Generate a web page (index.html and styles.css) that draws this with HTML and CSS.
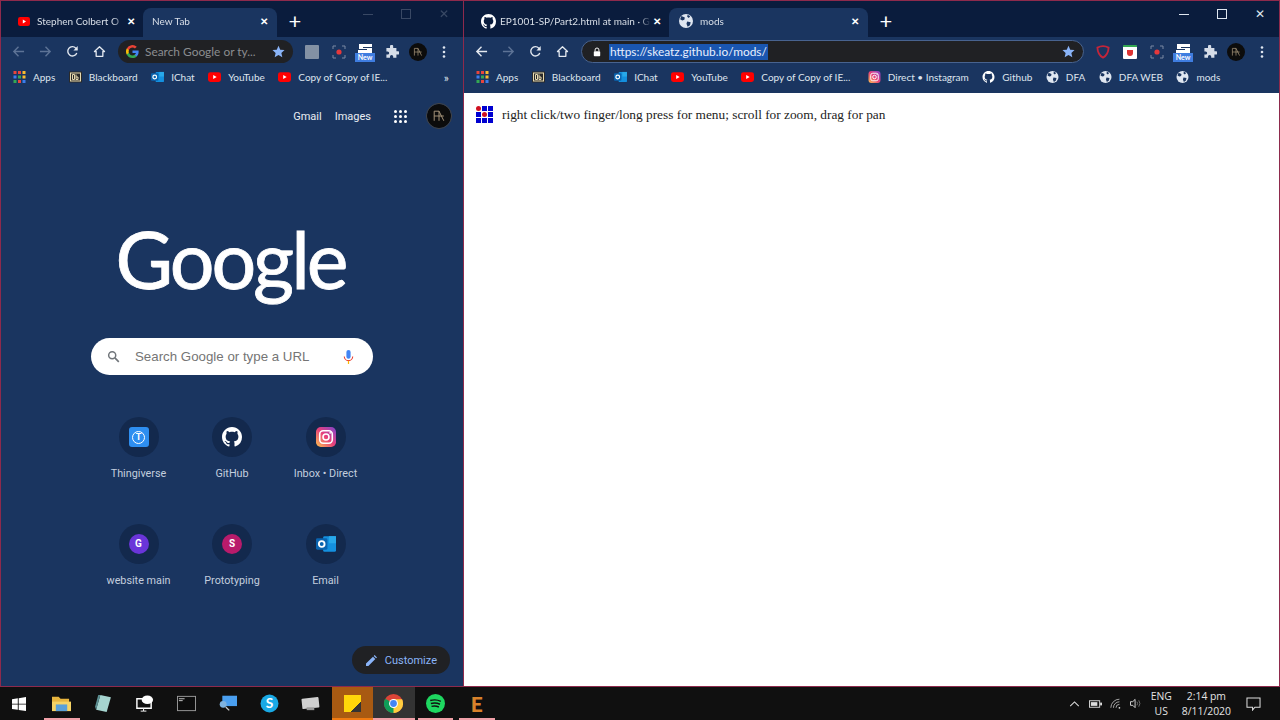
FILE: index.html
```html
<!DOCTYPE html>
<html lang="en">
<head>
    <meta charset="UTF-8">
    <title>Two Chrome windows</title>
    <link rel="stylesheet" href="styles.css">
</head>
<body>
    <svg class="defs" width="0" height="0">
        <defs>
            <symbol id="yt" viewBox="0 0 12 9"><rect width="12" height="9" rx="2.2" fill="#f00"/><path d="M4.8 2.6v3.8L8 4.5z" fill="#fff"/></symbol>
            <symbol id="gh" viewBox="0 0 16 16"><path fill="#fff" d="M8 0C3.58 0 0 3.58 0 8c0 3.54 2.29 6.53 5.47 7.59.4.07.55-.17.55-.38 0-.19-.01-.82-.01-1.49-2.01.37-2.53-.49-2.69-.94-.09-.23-.48-.94-.82-1.13-.28-.15-.68-.52-.01-.53.63-.01 1.08.58 1.23.82.72 1.21 1.87.87 2.33.66.07-.52.28-.87.51-1.07-1.78-.2-3.64-.89-3.64-3.95 0-.87.31-1.59.82-2.15-.08-.2-.36-1.02.08-2.12 0 0 .67-.21 2.2.82.64-.18 1.32-.27 2-.27s1.36.09 2 .27c1.53-1.04 2.2-.82 2.2-.82.44 1.1.16 1.92.08 2.12.51.56.82 1.27.82 2.15 0 3.07-1.87 3.75-3.65 3.95.29.25.54.73.54 1.48 0 1.07-.01 1.93-.01 2.2 0 .21.15.46.55.38A8.01 8.01 0 0 0 16 8c0-4.42-3.58-8-8-8z"/></symbol>
            <symbol id="globe" viewBox="0 0 12 12"><circle cx="6" cy="6" r="6" fill="#dfe6f0"/><path d="M2 1.8 5 3 4.6 5 2.8 5.6 1 4.6zM7 6.4l3 .6-.6 2.6L7.4 11 6.4 8.4zM7.4.6 9.6 2 8.4 3.4 7 2.4z" fill="#1a3560"/></symbol>
            <symbol id="apps" viewBox="0 0 12 12"><g fill="#e8453c"><rect width="3" height="3"/><rect x="4.5" width="3" height="3"/></g><rect x="9" width="3" height="3" fill="#f9bb2d"/><rect y="4.5" width="3" height="3" fill="#3b7ded"/><rect x="4.5" y="4.5" width="3" height="3" fill="#34a853"/><rect x="9" y="4.5" width="3" height="3" fill="#f9bb2d"/><rect y="9" width="3" height="3" fill="#34a853"/><rect x="4.5" y="9" width="3" height="3" fill="#e8453c"/><rect x="9" y="9" width="3" height="3" fill="#3b7ded"/></symbol>
            <symbol id="bb" viewBox="0 0 13 11"><rect width="13" height="11" fill="#2a2a2a"/><rect x="1.5" y="1.5" width="10" height="8" fill="none" stroke="#e6d9b0"/><path d="M3.5 3v5M3.5 3h2v5h-2M7 3v5h2V5.5H7" fill="none" stroke="#e6d9b0"/></symbol>
            <symbol id="outlook" viewBox="0 0 14 13"><rect x="5" y="1" width="9" height="11" rx="1" fill="#1490df"/><rect x="9" y="1" width="5" height="5" fill="#28a8ea"/><rect y="2.5" width="8" height="8" rx="1" fill="#0a64b0"/><circle cx="4" cy="6.5" r="2" fill="none" stroke="#fff" stroke-width="1.3"/></symbol>
            <linearGradient id="ig" x1="0" y1="1" x2="1" y2="0"><stop offset="0" stop-color="#fdc34f"/><stop offset=".5" stop-color="#e8407a"/><stop offset="1" stop-color="#7d45d0"/></linearGradient>
            <symbol id="insta" viewBox="0 0 14 14"><rect width="14" height="14" rx="3.4" fill="url(#ig)"/><rect x="2.6" y="2.6" width="8.8" height="8.8" rx="2.4" fill="none" stroke="#fff" stroke-width="1.1"/><circle cx="7" cy="7" r="2.1" fill="none" stroke="#fff" stroke-width="1.1"/><circle cx="9.9" cy="4.1" r=".6" fill="#fff"/></symbol>
            <symbol id="back" viewBox="0 0 14 14"><path d="M13 7H2M7 2 2 7l5 5" fill="none" stroke="currentColor" stroke-width="1.5"/></symbol>
            <symbol id="forward" viewBox="0 0 14 14"><path d="M1 7h11M7 2l5 5-5 5" fill="none" stroke="currentColor" stroke-width="1.5"/></symbol>
            <symbol id="reload" viewBox="0 0 14 14"><path d="M11.6 8.6A5 5 0 1 1 10.6 3.4L12 5" fill="none" stroke="currentColor" stroke-width="1.5"/><path d="M12.6 1.2v4.6H8z" fill="currentColor"/></symbol>
            <symbol id="home" viewBox="0 0 14 14"><path d="M7 1.8 1.6 7H3.4v5.2h7.2V7h1.8z" fill="none" stroke="currentColor" stroke-width="1.4" stroke-linejoin="round"/></symbol>
            <symbol id="star" viewBox="0 0 14 14"><path d="m7 .8 1.9 4.2 4.6.5-3.4 3.1 1 4.5L7 10.8l-4.1 2.3 1-4.5L.5 5.5 5.1 5z" fill="#8ab4f8"/></symbol>
            <symbol id="puzzle" viewBox="0 0 14 14"><path d="M5 1.4a1.6 1.6 0 0 1 3.2 0V3h3.2v3.2H13a1.6 1.6 0 0 1 0 3.2h-1.6v3.4H8.2v-1.3a1.6 1.6 0 0 0-3.2 0v1.3H1.4V9.6h1.2a1.6 1.6 0 0 0 0-3.2H1.4V3H5z" fill="#d6dde8"/></symbol>
            <symbol id="dots" viewBox="0 0 4 14"><g fill="#dfe6f0"><circle cx="2" cy="2.5" r="1.3"/><circle cx="2" cy="7" r="1.3"/><circle cx="2" cy="11.5" r="1.3"/></g></symbol>
            <symbol id="record" viewBox="0 0 14 14"><path d="M1 4V1h3M10 1h3v3M13 10v3h-3M4 13H1v-3" fill="none" stroke="#7b8aa3"/><circle cx="7" cy="7" r="2.6" fill="#e5383b"/></symbol>
            <symbol id="avatar" viewBox="0 0 20 20"><circle cx="10" cy="10" r="10" fill="#0c0c0c"/><path d="M6 14V6h4v8M10 6l4 8M10 10h4M6 10h4" fill="none" stroke="#a8977c" stroke-width=".8"/></symbol>
            <symbol id="new-ext" viewBox="0 0 20 20"><path d="M4 2h13v3H8v1h9v5H3V8h9V7H4z" fill="#fff"/><rect y="11" width="20" height="9" fill="#3f7de0"/></symbol>
            <symbol id="g-color" viewBox="0 0 14 14"><path d="M13.6 7.2c0-.5 0-.9-.1-1.3H7v2.6h3.7a3.2 3.2 0 0 1-1.4 2.1v1.7h2.2c1.3-1.2 2.1-3 2.1-5.1z" fill="#4285f4"/><path d="M7 14c1.9 0 3.4-.6 4.5-1.7l-2.2-1.7c-.6.4-1.4.7-2.3.7-1.8 0-3.3-1.2-3.9-2.9H.8v1.8A7 7 0 0 0 7 14z" fill="#34a853"/><path d="M3.1 8.4a4.2 4.2 0 0 1 0-2.8V3.8H.8a7 7 0 0 0 0 6.4z" fill="#fbbc05"/><path d="M7 2.8c1 0 1.9.4 2.6 1l2-1.9A7 7 0 0 0 .8 3.8l2.3 1.8C3.7 4 5.2 2.8 7 2.8z" fill="#ea4335"/></symbol>
        </defs>
    </svg>

    <div class="desktop">
        <section class="window window-left">
            <div class="tabstrip">
                <div class="tab">
                    <svg class="fav-yt"><use href="#yt"/></svg>
                    <span class="tab-title">Stephen Colbert O</span>
                    <span class="tab-x">✕</span>
                </div>
                <div class="tab active">
                    <span class="tab-title">New Tab</span>
                    <span class="tab-x">✕</span>
                </div>
                <span class="new-tab">+</span>
                <div class="win-controls dim">
                    <span class="win-min"></span>
                    <span class="win-max"></span>
                    <span class="win-close">✕</span>
                </div>
            </div>
            <div class="toolbar">
                <svg class="nav off"><use href="#back"/></svg>
                <svg class="nav off"><use href="#forward"/></svg>
                <svg class="nav"><use href="#reload"/></svg>
                <svg class="nav"><use href="#home"/></svg>
                <div class="omnibox short">
                    <svg class="omni-g"><use href="#g-color"/></svg>
                    <span class="omni-hint">Search Google or ty...</span>
                    <svg class="omni-star"><use href="#star"/></svg>
                </div>
                <div class="ext-row">
                    <span class="ext-grey"></span>
                    <svg class="ext"><use href="#record"/></svg>
                    <span class="ext-new"><svg class="ext-new-ic"><use href="#new-ext"/></svg><b>New</b></span>
                    <svg class="ext"><use href="#puzzle"/></svg>
                    <svg class="ext-avatar"><use href="#avatar"/></svg>
                    <svg class="ext-dots"><use href="#dots"/></svg>
                </div>
            </div>
            <div class="bookmarks">
                <a class="bm"><svg><use href="#apps"/></svg>Apps</a>
                <a class="bm"><svg><use href="#bb"/></svg>Blackboard</a>
                <a class="bm"><svg><use href="#outlook"/></svg>IChat</a>
                <a class="bm"><svg><use href="#yt"/></svg>YouTube</a>
                <a class="bm"><svg><use href="#yt"/></svg>Copy of Copy of IE...</a>
                <span class="bm-more">»</span>
            </div>
            <main class="ntp">
                <div class="ntp-top">
                    <a>Gmail</a>
                    <a>Images</a>
                    <span class="ntp-grid"><i></i><i></i><i></i><i></i><i></i><i></i><i></i><i></i><i></i></span>
                    <svg class="ntp-avatar"><use href="#avatar"/></svg>
                </div>
                <div class="logo">Google</div>
                <div class="ntp-search">
                    <svg class="ntp-lens" viewBox="0 0 14 14"><circle cx="5.6" cy="5.6" r="3.8" fill="none" stroke="#70757a" stroke-width="1.6"/><path d="m8.5 8.5 4.2 4.2" stroke="#70757a" stroke-width="1.8"/></svg>
                    <span class="ntp-hint">Search Google or type a URL</span>
                    <svg class="ntp-mic" viewBox="0 0 12 16"><rect x="3.6" y="0" width="4.8" height="10" rx="2.4" fill="#4285f4"/><path d="M1.2 7.4a4.8 4.8 0 0 0 9.6 0" fill="none" stroke="#ea4335" stroke-width="1.3"/><path d="M6 12.4V16" stroke="#fbbc05" stroke-width="1.4"/></svg>
                </div>
                <div class="shortcuts">
                    <div class="shortcut">
                        <span class="sc-ball"><span class="sc-thing"><span>T</span></span></span>
                        <span class="sc-label">Thingiverse</span>
                    </div>
                    <div class="shortcut">
                        <span class="sc-ball"><svg class="sc-ic"><use href="#gh"/></svg></span>
                        <span class="sc-label">GitHub</span>
                    </div>
                    <div class="shortcut">
                        <span class="sc-ball"><svg class="sc-ic"><use href="#insta"/></svg></span>
                        <span class="sc-label">Inbox • Direct</span>
                    </div>
                    <div class="shortcut">
                        <span class="sc-ball"><span class="sc-letter purple">G</span></span>
                        <span class="sc-label">website main</span>
                    </div>
                    <div class="shortcut">
                        <span class="sc-ball"><span class="sc-letter pink">S</span></span>
                        <span class="sc-label">Prototyping</span>
                    </div>
                    <div class="shortcut">
                        <span class="sc-ball"><svg class="sc-ic"><use href="#outlook"/></svg></span>
                        <span class="sc-label">Email</span>
                    </div>
                </div>
                <div class="customize">
                    <svg viewBox="0 0 12 12"><path d="M0 12V9.4L7.6 1.8l2.6 2.6L2.6 12zM8.4 1l1-1L12 2.6l-1 1z" fill="#8ab4f8"/></svg>
                    <span>Customize</span>
                </div>
            </main>
        </section>

        <section class="window window-right">
            <div class="tabstrip">
                <div class="tab long">
                    <svg class="fav-gh"><use href="#gh"/></svg>
                    <span class="tab-title">EP1001-SP/Part2.html at main · G</span>
                    <span class="tab-x">✕</span>
                </div>
                <div class="tab active wide">
                    <svg class="fav-globe"><use href="#globe"/></svg>
                    <span class="tab-title">mods</span>
                    <span class="tab-x">✕</span>
                </div>
                <span class="new-tab">+</span>
                <div class="win-controls">
                    <span class="win-min"></span>
                    <span class="win-max"></span>
                    <span class="win-close">✕</span>
                </div>
            </div>
            <div class="toolbar">
                <svg class="nav"><use href="#back"/></svg>
                <svg class="nav off"><use href="#forward"/></svg>
                <svg class="nav"><use href="#reload"/></svg>
                <svg class="nav"><use href="#home"/></svg>
                <div class="omnibox focused">
                    <svg class="omni-lock" viewBox="0 0 10 12"><path d="M2.6 5V3.4a2.4 2.4 0 0 1 4.8 0V5" fill="none" stroke="#fff" stroke-width="1.2"/><rect x="1" y="5" width="8" height="6.4" rx="1" fill="#fff"/></svg>
                    <span class="omni-url">https://skeatz.github.io/mods/</span>
                    <svg class="omni-star"><use href="#star"/></svg>
                </div>
                <div class="ext-row">
                    <svg class="ext" viewBox="0 0 14 14"><path d="M1.4 2.6C5 .8 9 .8 12.6 2.6 12.4 7 10 11 7 12.6 4 11 1.6 7 1.4 2.6z" fill="none" stroke="#c4253a" stroke-width="1.8"/></svg>
                    <span class="ext-honey"><i></i></span>
                    <svg class="ext"><use href="#record"/></svg>
                    <span class="ext-new"><svg class="ext-new-ic"><use href="#new-ext"/></svg><b>New</b></span>
                    <svg class="ext"><use href="#puzzle"/></svg>
                    <svg class="ext-avatar"><use href="#avatar"/></svg>
                    <svg class="ext-dots"><use href="#dots"/></svg>
                </div>
            </div>
            <div class="bookmarks">
                <a class="bm"><svg><use href="#apps"/></svg>Apps</a>
                <a class="bm"><svg><use href="#bb"/></svg>Blackboard</a>
                <a class="bm"><svg><use href="#outlook"/></svg>IChat</a>
                <a class="bm"><svg><use href="#yt"/></svg>YouTube</a>
                <a class="bm"><svg><use href="#yt"/></svg>Copy of Copy of IE...</a>
                <a class="bm bm-ig"><svg><use href="#insta"/></svg>Direct • Instagram</a>
                <a class="bm"><svg><use href="#gh"/></svg>Github</a>
                <a class="bm"><svg><use href="#globe"/></svg>DFA</a>
                <a class="bm"><svg><use href="#globe"/></svg>DFA WEB</a>
                <a class="bm"><svg><use href="#globe"/></svg>mods</a>
            </div>
            <main class="mods">
                <span class="mods-logo">
                    <i class="red"></i><i></i><i></i>
                    <i></i><i class="red"></i><i></i>
                    <i></i><i></i><i></i>
                </span>
                <span>right click/two finger/long press for menu; scroll for zoom, drag for pan</span>
            </main>
        </section>
    </div>

    <footer class="taskbar">
        <svg class="tb-win" viewBox="0 0 14 14"><path d="M0 2.2 5.8 1.3V6.7H0zM6.7 1.2 14 0V6.7H6.7zM0 7.5H5.8V12.8L0 11.9zM6.7 7.5H14V14L6.7 12.9z" fill="#fff"/></svg>
        <span class="tb-item running"><svg viewBox="0 0 20 18"><path d="M0 2h7l2 2h9v13H0z" fill="#e8b53e"/><rect y="7" width="20" height="10" fill="#f6d365"/><rect x="4" y="10" width="12" height="7" fill="#5aa0d8"/></svg></span>
        <span class="tb-item"><svg viewBox="0 0 18 18"><path d="M6 1 16 3 12 17 2 15z" fill="#a5d4cf"/><path d="M6 1 2 15 1 12 4 1z" fill="#5b8f92"/></svg></span>
        <span class="tb-item"><svg viewBox="0 0 20 20"><path d="M2 5H17V15H2z" fill="none" stroke="#fff" stroke-width="1.5"/><ellipse cx="13" cy="6" rx="6" ry="4.5" fill="#fff"/><path d="M9 15V18H6M9 18H12" stroke="#fff"/></svg></span>
        <span class="tb-item"><svg viewBox="0 0 20 16"><rect x=".5" y=".5" width="19" height="15" fill="#0c0c0c" stroke="#9a9a9a"/><path d="M2 3H8M2 5H6" stroke="#ccc"/></svg></span>
        <span class="tb-item"><svg viewBox="0 0 22 20"><rect x="5" y="1" width="17" height="12" fill="#4a9ff0"/><circle cx="6" cy="11" r="4" fill="#7fb3e0"/><path d="m9 14 4 4" stroke="#ccc" stroke-width="1.5"/></svg></span>
        <span class="tb-item"><svg viewBox="0 0 18 18"><circle cx="9" cy="9" r="8.5" fill="#19a9e5"/><text class="tb-skype" x="9" y="13.5" text-anchor="middle">S</text></svg></span>
        <span class="tb-item"><svg viewBox="0 0 20 16"><rect x="1" y="2" width="18" height="11" rx="1" fill="#d0d0d0" transform="rotate(-6 10 8)"/><rect x="6" y="12" width="8" height="3" fill="#999"/></svg></span>
        <span class="tb-item tb-sticky running"><span class="sticky"></span></span>
        <span class="tb-item tb-chrome running"><svg viewBox="0 0 18 18"><circle cx="9" cy="9" r="9" fill="#db4437"/><path d="M9 9 1.2 4.5A9 9 0 0 0 9 18l4-4z" fill="#0f9d58"/><path d="M9 5h8.1A9 9 0 0 1 9 18z" fill="#ffcd40"/><circle cx="9" cy="9" r="4.2" fill="#fff"/><circle cx="9" cy="9" r="3.2" fill="#4285f4"/></svg></span>
        <span class="tb-item running"><svg viewBox="0 0 18 18"><circle cx="9" cy="9" r="9" fill="#1ed760"/><path d="M4 6.2c3.5-1 7-.8 10 .8M4.6 9c3-.8 6-.6 8.6.7M5.2 11.7c2.4-.6 4.8-.4 7 .6" fill="none" stroke="#111" stroke-width="1.4"/></svg></span>
        <span class="tb-item running"><span class="tb-e">E</span></span>

        <div class="tray">
            <svg class="tray-up" viewBox="0 0 12 7"><path d="m1 6 5-5 5 5" fill="none" stroke="#ddd" stroke-width="1.2"/></svg>
            <svg class="tray-batt" viewBox="0 0 14 8"><rect x=".5" y=".5" width="11" height="7" fill="none" stroke="#ddd"/><rect x="2" y="2" width="7" height="4" fill="#ddd"/><rect x="12" y="2.5" width="2" height="3" fill="#ddd"/></svg>
            <svg class="tray-wifi" viewBox="0 0 14 12"><path d="M1 11A10 10 0 0 1 11 1M4 11A7 7 0 0 1 11 4M7 11A4 4 0 0 1 11 7" fill="none" stroke="#bbb"/><circle cx="11" cy="11" r="1" fill="#ddd"/></svg>
            <svg class="tray-vol" viewBox="0 0 14 12"><path d="M1 4H3.5L6 1.5V10.5L3.5 8H1z" fill="none" stroke="#ddd"/><path d="M8 4Q9.5 6 8 8M10 2.5Q12.5 6 10 9.5" fill="none" stroke="#777"/></svg>
            <div class="tray-lang"><span>ENG</span><span>US</span></div>
            <div class="tray-clock"><span>2:14 pm</span><span>8/11/2020</span></div>
            <svg class="tray-note" viewBox="0 0 16 15"><path d="M1 1H15V11H9.5L7 14V11H1z" fill="none" stroke="#ddd" stroke-width="1.1"/></svg>
        </div>
    </footer>
</body>
</html>
```

FILE: styles.css
```css
* {
    box-sizing: border-box;
}

html, body {
    margin: 0;
    width: 1280px;
    height: 720px;
    overflow: hidden;
}

body {
    display: flex;
    flex-direction: column;
    font-family: Lato, "Open Sans", sans-serif;
    background: #101010;
    color: #e6ebf2;
}

.defs {
    position: absolute;
}

svg {
    display: block;
    flex: none;
}

.desktop {
    display: flex;
    height: 687px;
}

.window {
    display: flex;
    flex-direction: column;
    border: 1px solid #8e2a4c;
}

.window-left {
    width: 464px;
}

.window-right {
    width: 816px;
    border-left: 0;
}

/* tabs */
.tabstrip {
    display: flex;
    height: 36px;
    padding: 7px 0 0 4px;
    background: #0a1c3d;
    font-size: 10px;
    flex: none;
}

.tab {
    display: flex;
    align-items: center;
    width: 138px;
    height: 29px;
    padding: 0 6px 3px 13px;
    color: #d9dfe8;
    white-space: nowrap;
}

.tab.long {
    width: 201px;
}

.tab.active {
    width: 134px;
    padding-left: 9px;
    padding-right: 7px;
    background: #1a3560;
    border-radius: 8px 8px 0 0;
}

.tab.wide {
    width: 199px;
    padding-left: 10px;
}

.tab-title {
    flex: 1;
    min-width: 0;
    overflow: hidden;
    -webkit-mask-image: linear-gradient(to left, transparent, #000 12px);
    mask-image: linear-gradient(to left, transparent, #000 12px);
}

.tab-x {
    width: 12px;
    font-size: 10px;
    font-weight: 700;
    color: #fff;
    text-align: center;
}

.fav-yt {
    width: 12px;
    height: 9px;
    margin-right: 7px;
}

.fav-gh {
    width: 15px;
    height: 15px;
    margin-right: 4px;
}

.fav-globe {
    width: 14px;
    height: 14px;
    margin-right: 7px;
}

.new-tab {
    width: 36px;
    height: 29px;
    font-size: 22px;
    line-height: 26px;
    color: #fff;
    text-align: center;
}

.win-controls {
    display: flex;
    align-items: center;
    justify-content: space-between;
    margin: -7px 0 0 auto;
    width: 100px;
    height: 26px;
    padding-right: 14px;
    color: #dfe6f0;
}

.win-controls.dim {
    opacity: 0.22;
}

.win-min {
    width: 10px;
    height: 1px;
    background: currentColor;
}

.win-max {
    width: 10px;
    height: 10px;
    border: 1px solid currentColor;
}

.win-close {
    font-size: 12px;
    line-height: 1;
}

/* toolbar */
.toolbar {
    display: flex;
    align-items: center;
    height: 29px;
    padding-left: 11px;
    background: #1a3560;
    flex: none;
}

.nav {
    width: 13px;
    height: 13px;
    margin-right: 14px;
    color: #e4e9f0;
}

.nav.off {
    color: #5d7396;
}

.omnibox {
    display: flex;
    align-items: center;
    height: 23px;
    margin-left: -2px;
    padding: 0 8px;
    background: #202124;
    border-radius: 12px;
    font-size: 11.9px;
}

.omnibox.short {
    width: 175px;
}

.omnibox.focused {
    width: 503px;
    border: 1px solid #48638f;
}

.omni-g {
    width: 13px;
    height: 13px;
    margin-right: 6px;
}

.omni-hint {
    flex: 1;
    color: #8b8d90;
    line-height: 15px;
    padding-bottom: 1px;
}

.omni-star {
    width: 13px;
    height: 13px;
}

.omni-lock {
    width: 8px;
    height: 10px;
    margin: 0 8px 0 3px;
}

.omni-url {
    margin-right: auto;
    padding: 0 1px 1px;
    background: #1a56b0;
    color: #e8f0fe;
    line-height: 15px;
}

.ext-row {
    display: flex;
    align-items: center;
    flex: 1;
    gap: 13px;
    padding-left: 12px;
}

.ext {
    width: 14px;
    height: 14px;
}

.ext-grey {
    width: 14px;
    height: 14px;
    background: #8391a4;
    border-radius: 1px;
}

.ext-honey {
    display: flex;
    align-items: center;
    justify-content: center;
    width: 14px;
    height: 14px;
    background: #fff;
    border-top: 2px solid #34a853;
    border-radius: 1px;
}

.ext-honey i {
    width: 6px;
    height: 6px;
    background: #d33;
    border-radius: 0 0 3px 3px;
}

.ext-new {
    position: relative;
    width: 20px;
    height: 20px;
    margin: 0 -3px 0 -4px;
}

.ext-new-ic {
    width: 20px;
    height: 20px;
}

.ext-new b {
    position: absolute;
    left: 0;
    right: 0;
    bottom: 0;
    color: #fff;
    font-size: 7px;
    line-height: 9px;
    text-align: center;
}

.ext-avatar {
    width: 18px;
    height: 18px;
    margin-left: -3px;
}

.ext-dots {
    width: 4px;
    height: 14px;
    margin-left: 2px;
}

/* bookmarks */
.bookmarks {
    display: flex;
    align-items: center;
    height: 27px;
    padding: 0 0 5px 12px;
    gap: 13.5px;
    background: #1a3560;
    font-size: 10px;
    color: #dfe5ee;
    flex: none;
}

.bm {
    display: flex;
    align-items: center;
    gap: 7px;
    white-space: nowrap;
}

.bm-ig {
    margin-left: 4px;
}

.bm svg {
    width: 13px;
    height: 12px;
}

.bm-more {
    margin-left: auto;
    margin-right: 14px;
    font-size: 12px;
}

/* new tab page */
.ntp {
    position: relative;
    flex: 1;
    display: flex;
    flex-direction: column;
    align-items: center;
    background: #1a3560;
}

.ntp-top {
    display: flex;
    align-items: center;
    align-self: stretch;
    justify-content: flex-end;
    gap: 13px;
    height: 46px;
    padding-right: 11px;
    font-size: 11px;
    font-family: Roboto, sans-serif;
    color: #e9edf3;
}

.ntp-grid {
    display: grid;
    grid-template-columns: repeat(3, 3px);
    gap: 2px;
    margin: 0 6px 0 10px;
}

.ntp-grid i {
    width: 3px;
    height: 3px;
    background: #fff;
    border-radius: 50%;
}

.ntp-avatar {
    width: 26px;
    height: 26px;
    border: 1px solid #444;
    border-radius: 50%;
}

.logo {
    margin: 71px 3px 0 0;
    height: 98px;
    color: #fff;
    font-size: 79px;
    line-height: 98px;
    letter-spacing: -3px;
    -webkit-text-stroke: 0.8px #fff;
}

.ntp-search {
    display: flex;
    align-items: center;
    flex: none;
    width: 282px;
    height: 37px;
    margin-top: 30px;
    padding: 0 19px 0 16px;
    background: #fff;
    border-radius: 19px;
    font-family: "Liberation Sans", sans-serif;
    font-size: 13.3px;
    color: #757575;
}

.ntp-lens {
    width: 13px;
    height: 13px;
}

.ntp-hint {
    flex: 1;
    margin-left: 15px;
}

.ntp-mic {
    width: 11px;
    height: 14px;
}

.shortcuts {
    display: grid;
    grid-template-columns: repeat(3, 93.5px);
    grid-auto-rows: 106.5px;
    margin-top: 42px;
    font-family: Roboto, sans-serif;
}

.shortcut {
    display: flex;
    flex-direction: column;
    align-items: center;
}

.sc-ball {
    display: flex;
    align-items: center;
    justify-content: center;
    width: 40px;
    height: 40px;
    background: #13294d;
    border-radius: 50%;
}

.sc-ic {
    width: 20px;
    height: 20px;
}

.sc-thing {
    display: flex;
    align-items: center;
    justify-content: center;
    width: 20px;
    height: 20px;
    background: #2e8ef0;
    border-radius: 3px;
}

.sc-thing span {
    width: 13px;
    height: 13px;
    border: 1px solid #fff;
    border-radius: 50%;
    font-size: 9px;
    line-height: 11px;
    font-weight: 700;
    color: #fff;
    text-align: center;
}

.sc-letter {
    width: 20px;
    height: 20px;
    border-radius: 50%;
    font-size: 10px;
    line-height: 20px;
    font-weight: 700;
    color: #fff;
    text-align: center;
}

.sc-letter.purple {
    background: #6a35d9;
}

.sc-letter.pink {
    background: #b81b6b;
}

.sc-label {
    margin-top: 10px;
    font-size: 10.8px;
    color: #c3cede;
    white-space: nowrap;
}

.customize {
    position: absolute;
    right: 13px;
    bottom: 12px;
    display: flex;
    align-items: center;
    gap: 8px;
    height: 28px;
    padding: 0 13px 0 14px;
    background: #202124;
    border-radius: 14px;
    font-family: Roboto, sans-serif;
    font-size: 11px;
    color: #8ab4f8;
}

.customize svg {
    width: 11px;
    height: 11px;
}

/* mods page */
.mods {
    flex: 1;
    display: flex;
    align-items: flex-start;
    gap: 8px;
    padding: 13px 12px;
    background: #fff;
    font-family: "Liberation Serif", serif;
    font-size: 13.33px;
    line-height: 17px;
    color: #222;
}

.mods-logo {
    display: grid;
    grid-template-columns: repeat(3, 5px);
    gap: 1px;
}

.mods-logo + span {
    margin-left: 1px;
}

.mods-logo i {
    height: 5px;
    background: #0000d0;
}

.mods-logo i.red {
    background: #d01020;
    border-radius: 50%;
}

/* taskbar */
.taskbar {
    display: flex;
    align-items: stretch;
    height: 33px;
    padding-left: 12px;
    background: #101010;
    flex: none;
}

.tb-win {
    width: 14px;
    height: 14px;
    align-self: center;
    margin-right: 15px;
}

.tb-item {
    position: relative;
    display: flex;
    align-items: center;
    justify-content: center;
    width: 41.5px;
}

.tb-item svg {
    width: 19px;
    height: 19px;
}

.tb-item.running::after {
    content: "";
    position: absolute;
    left: 3px;
    right: 3px;
    bottom: 0;
    height: 2px;
    background: #f0a0a8;
}

.tb-sticky {
    background: #a85a12;
}

.tb-chrome {
    background: #333;
}

.tb-sticky.running::after,
.tb-chrome.running::after {
    left: 0;
    right: 0;
}

.tb-sticky.running::after {
    background: #f07a10;
}

.sticky {
    width: 17px;
    height: 17px;
    background: linear-gradient(135deg, #ffd60a 70%, #333 70%);
}

.tb-skype {
    fill: #fff;
    font-size: 13px;
    font-weight: 700;
}

.tb-e {
    font-size: 21px;
    font-weight: 900;
    color: #d9822b;
}

.tray {
    display: flex;
    align-items: center;
    margin-left: auto;
    padding-right: 19px;
    color: #e3e3e3;
    font-family: "Open Sans", sans-serif;
    font-size: 10.4px;
}

.tray-up {
    width: 11px;
    height: 6px;
    margin-right: 9px;
}

.tray-batt {
    width: 13px;
    height: 8px;
    margin-right: 8px;
}

.tray-wifi {
    width: 12px;
    height: 11px;
    margin-right: 7px;
}

.tray-vol {
    width: 14px;
    height: 11px;
    margin-right: 8px;
}

.tray-lang,
.tray-clock {
    display: flex;
    flex-direction: column;
    align-items: center;
    gap: 1px;
    line-height: 14px;
}

.tray-clock {
    margin: 0 15px 0 10px;
}

.tray-note {
    width: 15px;
    height: 14px;
}
```
